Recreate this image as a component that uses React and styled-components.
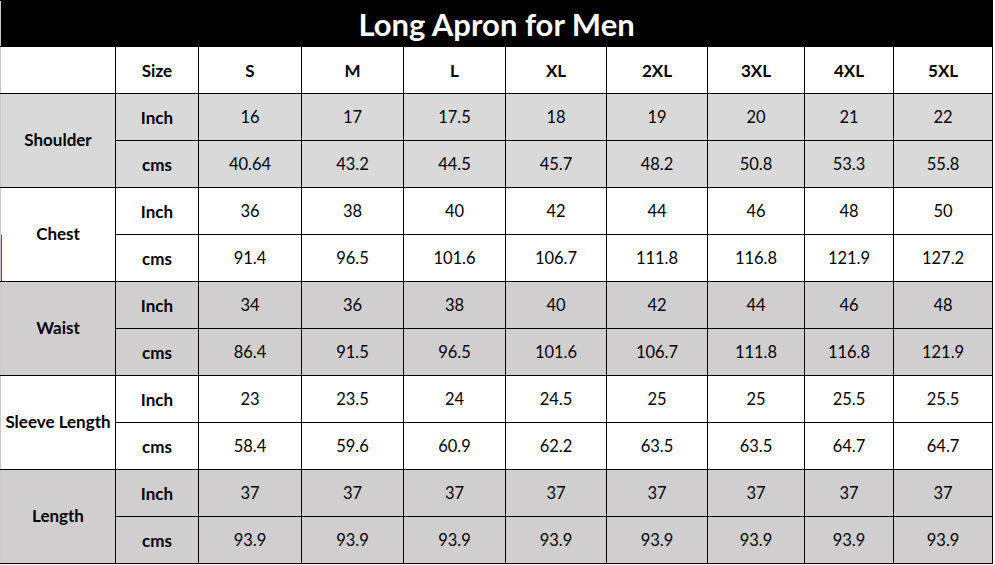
import React from "react";
import styled, { createGlobalStyle } from "styled-components";

const GlobalStyle = createGlobalStyle`
  body {
    margin: 0;
    background: #ffffff;
    font-family: Lato, "Liberation Sans", sans-serif;
  }
`;

const sizes = ["S", "M", "L", "XL", "2XL", "3XL", "4XL", "5XL"];
const colWidths = [115, 83, 103, 102, 102, 101, 101, 97, 89, 99];

const groups = [
  {
    name: "Shoulder",
    bg: "#d9d9d9",
    inch: ["16", "17", "17.5", "18", "19", "20", "21", "22"],
    cms: ["40.64", "43.2", "44.5", "45.7", "48.2", "50.8", "53.3", "55.8"],
  },
  {
    name: "Chest",
    bg: "#ffffff",
    inch: ["36", "38", "40", "42", "44", "46", "48", "50"],
    cms: ["91.4", "96.5", "101.6", "106.7", "111.8", "116.8", "121.9", "127.2"],
  },
  {
    name: "Waist",
    bg: "#d0cece",
    inch: ["34", "36", "38", "40", "42", "44", "46", "48"],
    cms: ["86.4", "91.5", "96.5", "101.6", "106.7", "111.8", "116.8", "121.9"],
  },
  {
    name: "Sleeve Length",
    bg: "#ffffff",
    inch: ["23", "23.5", "24", "24.5", "25", "25", "25.5", "25.5"],
    cms: ["58.4", "59.6", "60.9", "62.2", "63.5", "63.5", "64.7", "64.7"],
  },
  {
    name: "Length",
    bg: "#d0cece",
    inch: ["37", "37", "37", "37", "37", "37", "37", "37"],
    cms: ["93.9", "93.9", "93.9", "93.9", "93.9", "93.9", "93.9", "93.9"],
  },
];

const Chart = styled.table`
  border-collapse: collapse;
  table-layout: fixed;
  width: 992px;
  color: #000;
  font-size: 16.5px;
  border-left: 1px solid #c8c8c8;
`;

const TitleCell = styled.th`
  height: 45px;
  padding: 0;
  background: #000;
  color: #fff;
  font-size: 31px;
  font-weight: 700;
  text-align: center;
  border: 1px solid #000;
  border-left: 1px solid #c8c8c8;
`;

const Row = styled.tr`
  height: 47px;
  background: ${(p) => p.$bg || "#fff"};
`;

const Cell = styled.td`
  padding: 0;
  text-align: center;
  vertical-align: middle;
  border: 1px solid #000;
  font-size: ${(p) => (p.$bold ? "17px" : "16.5px")};
  font-weight: ${(p) => (p.$bold ? 700 : 400)};
  white-space: nowrap;

  &:first-child {
    border-left: 1px solid #c8c8c8;
  }
`;

const GroupCell = styled(Cell)`
  padding-bottom: 3px;
  background: ${(p) =>
    p.$mark
      ? "linear-gradient(#2e6b3e, #2e6b3e) 0 100% / 1px 50% no-repeat"
      : "transparent"};
`;

export default function App() {
  return (
    <>
      <GlobalStyle />
      <Chart>
        <colgroup>
          {colWidths.map((w, i) => (
            <col key={i} style={{ width: w }} />
          ))}
        </colgroup>
        <thead>
          <tr>
            <TitleCell colSpan={10}>Long Apron for Men</TitleCell>
          </tr>
        </thead>
        <tbody>
          <Row>
            <Cell />
            <Cell $bold>Size</Cell>
            {sizes.map((s) => (
              <Cell key={s} $bold>
                {s}
              </Cell>
            ))}
          </Row>
          {groups.map((g) => (
            <React.Fragment key={g.name}>
              <Row $bg={g.bg}>
                <GroupCell rowSpan={2} $bold $mark={g.name === "Chest"}>
                  {g.name}
                </GroupCell>
                <Cell $bold>Inch</Cell>
                {g.inch.map((v, i) => (
                  <Cell key={i}>{v}</Cell>
                ))}
              </Row>
              <Row $bg={g.bg}>
                <Cell $bold>cms</Cell>
                {g.cms.map((v, i) => (
                  <Cell key={i}>{v}</Cell>
                ))}
              </Row>
            </React.Fragment>
          ))}
        </tbody>
      </Chart>
    </>
  );
}
